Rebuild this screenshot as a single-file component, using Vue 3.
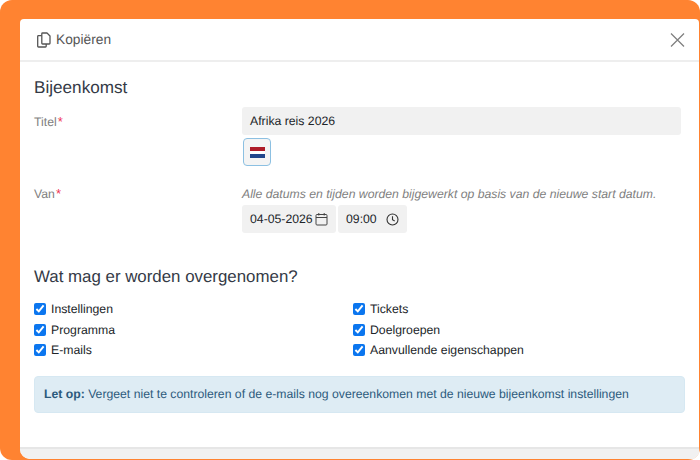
<template>
  <div class="frame">
    <div class="modal">
      <header class="head">
        <div class="head-title">
          <svg class="copy" width="16" height="16" viewBox="0 0 16 16" fill="none" stroke="#555" stroke-width="1.300" stroke-linejoin="round">
            <path d="M6.600 1h4.400l3 3v7.200a.8.8 0 0 1-.8.8H6.600a.8.8 0 0 1-.8-.8V1.800a.8.8 0 0 1 .8-.8z" />
            <path d="M5.800 3.600H2.500a.8.8 0 0 0-.8.8v9.800a.8.8 0 0 0 .8.8h6.900a.8.8 0 0 0 .8-.8V12" />
          </svg>
          <span>Kopiëren</span>
        </div>
        <svg class="close" width="16" height="16" viewBox="0 0 16 16" stroke="#808080" stroke-width="1.300" fill="none">
          <path d="M2 1.500l13 13M15 1.500l-13 13" />
        </svg>
      </header>
      <main class="body">
        <h2 class="h-first">Bijeenkomst</h2>
        <div class="field">
          <label class="lab">Titel<span class="req">*</span></label>
          <div class="ctrl">
            <div class="input wide">Afrika reis 2026</div>
            <div class="flag-btn">
              <span class="flag"><i class="r"></i><i class="w"></i><i class="b"></i></span>
            </div>
          </div>
        </div>
        <div class="field van">
          <label class="lab">Van<span class="req">*</span></label>
          <div class="ctrl">
            <div class="hint">Alle datums en tijden worden bijgewerkt op basis van de nieuwe start datum.</div>
            <div class="dates">
              <div class="input date">
                <span>04-05-2026</span>
                <svg width="13" height="14" viewBox="0 0 13 14" fill="none" stroke="#444" stroke-width="1">
                  <rect x="1" y="2.500" width="11" height="10.500" rx="1" />
                  <path d="M1 5.500h11M3.800 1v2.500M9.200 1v2.500" />
                </svg>
              </div>
              <div class="input time">
                <span>09:00</span>
                <svg width="13" height="13" viewBox="0 0 13 13" fill="none" stroke="#333" stroke-width="1.100">
                  <circle cx="6.500" cy="6.500" r="5.500" />
                  <path d="M6.500 3.200v3.500l2.200 1.200" />
                </svg>
              </div>
            </div>
          </div>
        </div>
        <h2 class="h-second">Wat mag er worden overgenomen?</h2>
        <div class="checks">
          <label v-for="o in options" :key="o" class="check">
            <input type="checkbox" checked />
            <span>{{ o }}</span>
          </label>
        </div>
        <div class="alert"><b>Let op:</b> Vergeet niet te controleren of de e-mails nog overeenkomen met de nieuwe bijeenkomst instellingen</div>
      </main>
      <footer class="foot"></footer>
    </div>
  </div>
</template>

<script setup>
const options = ['Instellingen', 'Tickets', 'Programma', 'Doelgroepen', 'E-mails', 'Aanvullende eigenschappen']
</script>

<style>
html, body { margin: 0; background: #fff; }
</style>

<style scoped>
.frame {
  width: 700px;
  height: 460px;
  box-sizing: border-box;
  overflow: hidden;
  background: #ff8331;
  border-radius: 12px;
  padding: 19px 1px 1px 20px;
  font-family: "Liberation Sans", Arial, sans-serif;
  color: #212529;
  text-rendering: geometricPrecision;
}
.modal {
  height: 100%;
  background: #fff;
  border-radius: 4px 4px 0 10px;
  display: flex;
  flex-direction: column;
  overflow: hidden;
}
.head {
  height: 43px;
  flex: none;
  box-sizing: border-box;
  border-bottom: 2px solid #eeeeee;
  display: flex;
  align-items: center;
  justify-content: space-between;
  padding: 0 14px 0 16px;
}
.head-title {
  display: flex;
  align-items: center;
  gap: 4px;
  font-size: 13.750px;
  color: #555;
}
.copy { flex: none; }
.body {
  flex: 1;
  padding: 0 14px;
}
h2 {
  margin: 0;
  font-weight: 400;
  color: #343a46;
}
.h-first {
  font-size: 17.150px;
  line-height: 20px;
  margin-top: 15px;
}
.h-second {
  font-size: 16.875px;
  line-height: 20px;
  margin-top: 34px;
}
.field {
  display: flex;
  margin-top: 10px;
}
.van { margin-top: 19px; }
.lab {
  width: 208px;
  flex: none;
  font-size: 12.250px;
  line-height: 29px;
  color: #808080;
}
.van .lab { line-height: 18px; }
.req {
  color: #ee3355;
  margin-left: 1px;
  font-size: 13px;
}
.ctrl {
  flex: 1;
  min-width: 0;
}
.input {
  box-sizing: border-box;
  height: 28px;
  background: #f1f1f1;
  border-radius: 3px;
  font-size: 12.250px;
  line-height: 29px;
  color: #212529;
  padding: 0 8px;
  white-space: nowrap;
}
.wide { width: 439px; }
.flag-btn {
  box-sizing: border-box;
  width: 28px;
  height: 28px;
  margin: 3px 0 0 1px;
  border: 1.500px solid #8cc0e2;
  border-radius: 4px;
  background: #f4f4f4;
  display: flex;
  align-items: center;
  justify-content: center;
}
.flag {
  width: 15px;
  display: flex;
  flex-direction: column;
}
.flag i { display: block; height: 4px; }
.flag .r { background: #ae1c28; }
.flag .w { background: #fff; height: 3px; }
.flag .b { background: #21468b; }
.hint {
  font-size: 12.220px;
  line-height: 18px;
  font-style: italic;
  color: #808080;
  white-space: nowrap;
}
.dates {
  display: flex;
  gap: 2px;
  margin-top: 2px;
}
.date, .time {
  display: flex;
  align-items: center;
  justify-content: space-between;
}
.date { width: 94px; padding-right: 8px; }
.time { width: 69px; padding-right: 8px; }
.checks {
  display: grid;
  grid-template-columns: 319px 1fr;
  grid-auto-rows: 20.500px;
  margin-top: 12px;
}
.check {
  display: flex;
  align-items: center;
  gap: 5px;
  font-size: 12.250px;
  color: #212529;
}
.check input {
  width: 12px;
  height: 12px;
  margin: 0;
  accent-color: #0b76ef;
}
.alert {
  box-sizing: border-box;
  height: 37px;
  margin-top: 15px;
  background: #deecf4;
  border: 1px solid #d6e8f2;
  border-radius: 4px;
  padding: 0 9px;
  font-size: 12.220px;
  line-height: 35px;
  color: #2c5a7c;
  white-space: nowrap;
}
.foot {
  flex: none;
  height: 12px;
  box-sizing: border-box;
  background: #f1f1f1;
  border-top: 2px solid #e6e6e6;
}
</style>
